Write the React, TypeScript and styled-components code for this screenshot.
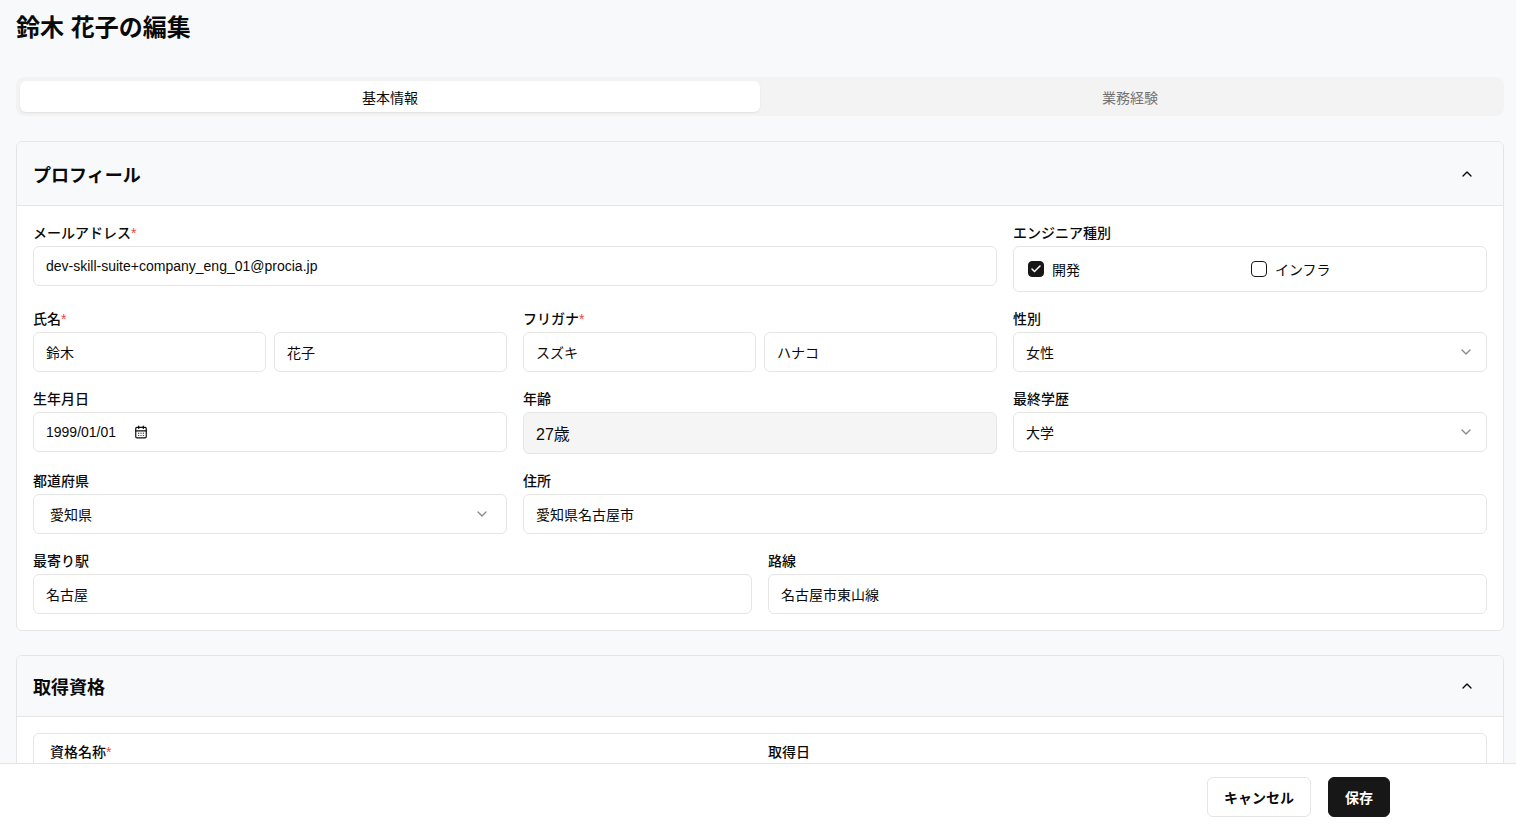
import React from "react";
import styled, { createGlobalStyle } from "styled-components";
import { ChevronUp, ChevronDown, Check, CalendarDays } from "lucide-react";

const Global = createGlobalStyle`
  html, body { margin: 0; background: #f8f9fb; }
  body { font-family: "Liberation Sans", "Noto Sans CJK JP", sans-serif; color: #0a0a0a; }
  * { box-sizing: border-box; }
`;

const Page = styled.div`
  padding: 12px 12px 100px 16px;
`;
const Title = styled.h1`
  margin: 0 0 33px;
  font-size: 24px;
  font-weight: 700;
  line-height: 32px;
`;
const Tabs = styled.div`
  display: grid;
  grid-template-columns: 1fr 1fr;
  background: #f3f3f3;
  border-radius: 8px;
  padding: 4px;
  height: 39px;
  margin-bottom: 25px;
`;
const Tab = styled.div<{ $active?: boolean }>`
  display: flex;
  align-items: center;
  justify-content: center;
  font-size: 14px;
  border-radius: 6px;
  color: ${(p) => (p.$active ? "#0a0a0a" : "#737373")};
  background: ${(p) => (p.$active ? "#fff" : "transparent")};
  box-shadow: ${(p) => (p.$active ? "0 1px 2px rgba(0,0,0,0.08)" : "none")};
`;
const Card = styled.section`
  background: #fff;
  border: 1px solid #e5e5e5;
  border-radius: 6px;
  margin-bottom: 24px;
  overflow: hidden;
`;
const CardHead = styled.div<{ $h: number }>`
  height: ${(p) => p.$h}px;
  background: #f8f9fa;
  border-bottom: 1px solid #e5e5e5;
  display: flex;
  align-items: center;
  justify-content: space-between;
  padding: 0 28px 0 16px;
  font-size: 18px;
  font-weight: 700;
`;
const Body = styled.div`
  padding: 17px 16px 16px;
  display: flex;
  flex-direction: column;
  gap: 17px;
`;
const Row = styled.div<{ $cols: string }>`
  display: grid;
  grid-template-columns: ${(p) => p.$cols};
  gap: 16px;
`;
const Field = styled.div<{ $span?: number }>`
  display: flex;
  flex-direction: column;
  gap: 3px;
  min-width: 0;
  grid-column: span ${(p) => p.$span ?? 1};
`;
const Label = styled.div`
  font-size: 14px;
  font-weight: 500;
  line-height: 20px;
`;
const Req = styled.span`
  color: #ef4444;
`;
const Pair = styled.div`
  display: grid;
  grid-template-columns: 1fr 1fr;
  gap: 8px;
`;
const Box = styled.div<{ $gray?: boolean; $big?: boolean; $h?: number; $start?: boolean }>`
  height: ${(p) => p.$h ?? 40}px;
  border: 1px solid #e5e5e5;
  border-radius: 6px;
  background: ${(p) => (p.$gray ? "#f5f5f5" : "#fff")};
  display: flex;
  align-items: center;
  justify-content: ${(p) => (p.$start ? "flex-start" : "space-between")};
  padding: 0 12px;
  font-size: ${(p) => (p.$big ? 16 : 14)}px;
  gap: 18px;
`;
const Checks = styled.div`
  display: grid;
  grid-template-columns: 1fr 1fr;
  width: 100%;
  padding-left: 2px;
`;
const CheckItem = styled.label`
  display: flex;
  align-items: center;
  gap: 8px;
  font-size: 14px;
`;
const CB = styled.span<{ $on?: boolean }>`
  width: 16px;
  height: 16px;
  border-radius: 4px;
  border: 1px solid #171717;
  background: ${(p) => (p.$on ? "#171717" : "#fff")};
  display: inline-flex;
  align-items: center;
  justify-content: center;
  color: #fff;
`;
const Inner = styled.div`
  margin: 16px 16px 0;
  border: 1px solid #e5e5e5;
  border-radius: 6px;
  padding: 8px 16px 40px;
  display: grid;
  grid-template-columns: 1fr 1fr;
  gap: 16px;
`;
const Footer = styled.div`
  position: fixed;
  left: 0;
  right: 0;
  bottom: 0;
  height: 66px;
  background: #fff;
  border-top: 1px solid #e5e5e5;
  display: flex;
  justify-content: flex-end;
  align-items: center;
  gap: 17px;
  padding-right: 126px;
`;
const Btn = styled.button<{ $primary?: boolean }>`
  height: 40px;
  padding: 0 16px;
  border-radius: 6px;
  font-family: inherit;
  font-size: 14px;
  font-weight: 600;
  border: 1px solid ${(p) => (p.$primary ? "#171717" : "#e5e5e5")};
  background: ${(p) => (p.$primary ? "#171717" : "#fff")};
  color: ${(p) => (p.$primary ? "#fff" : "#0a0a0a")};
`;
const Chev = () => <ChevronDown size={16} color="#8a8a8a" />;

export default function App() {
  return (
    <>
      <Global />
      <Page>
        <Title>鈴木 花子の編集</Title>
        <Tabs>
          <Tab $active>基本情報</Tab>
          <Tab>業務経験</Tab>
        </Tabs>
        <Card>
          <CardHead $h={64}>
            プロフィール <ChevronUp size={16} />
          </CardHead>
          <Body>
            <Row $cols="1fr 1fr 1fr">
              <Field $span={2}>
                <Label>メールアドレス<Req>*</Req></Label>
                <Box>dev-skill-suite+company_eng_01@procia.jp</Box>
              </Field>
              <Field>
                <Label>エンジニア種別</Label>
                <Box $h={46}>
                  <Checks>
                    <CheckItem><CB $on><Check size={12} strokeWidth={3} /></CB>開発</CheckItem>
                    <CheckItem><CB />インフラ</CheckItem>
                  </Checks>
                </Box>
              </Field>
            </Row>
            <Row $cols="1fr 1fr 1fr">
              <Field>
                <Label>氏名<Req>*</Req></Label>
                <Pair><Box>鈴木</Box><Box>花子</Box></Pair>
              </Field>
              <Field>
                <Label>フリガナ<Req>*</Req></Label>
                <Pair><Box>スズキ</Box><Box>ハナコ</Box></Pair>
              </Field>
              <Field>
                <Label>性別</Label>
                <Box>女性<Chev /></Box>
              </Field>
            </Row>
            <Row $cols="1fr 1fr 1fr">
              <Field>
                <Label>生年月日</Label>
                <Box $start>1999/01/01 <CalendarDays size={14} /></Box>
              </Field>
              <Field>
                <Label>年齢</Label>
                <Box $gray $big $h={42}>27歳</Box>
              </Field>
              <Field>
                <Label>最終学歴</Label>
                <Box>大学<Chev /></Box>
              </Field>
            </Row>
            <Row $cols="1fr 1fr 1fr">
              <Field>
                <Label>都道府県</Label>
                <Box style={{ paddingLeft: 16, paddingRight: 16 }}>愛知県<Chev /></Box>
              </Field>
              <Field $span={2}>
                <Label>住所</Label>
                <Box>愛知県名古屋市</Box>
              </Field>
            </Row>
            <Row $cols="1fr 1fr">
              <Field>
                <Label>最寄り駅</Label>
                <Box>名古屋</Box>
              </Field>
              <Field>
                <Label>路線</Label>
                <Box>名古屋市東山線</Box>
              </Field>
            </Row>
          </Body>
        </Card>
        <Card>
          <CardHead $h={61}>
            取得資格 <ChevronUp size={16} />
          </CardHead>
          <Inner>
            <Label>資格名称<Req>*</Req></Label>
            <Label>取得日</Label>
          </Inner>
        </Card>
      </Page>
      <Footer>
        <Btn>キャンセル</Btn>
        <Btn $primary>保存</Btn>
      </Footer>
    </>
  );
}
